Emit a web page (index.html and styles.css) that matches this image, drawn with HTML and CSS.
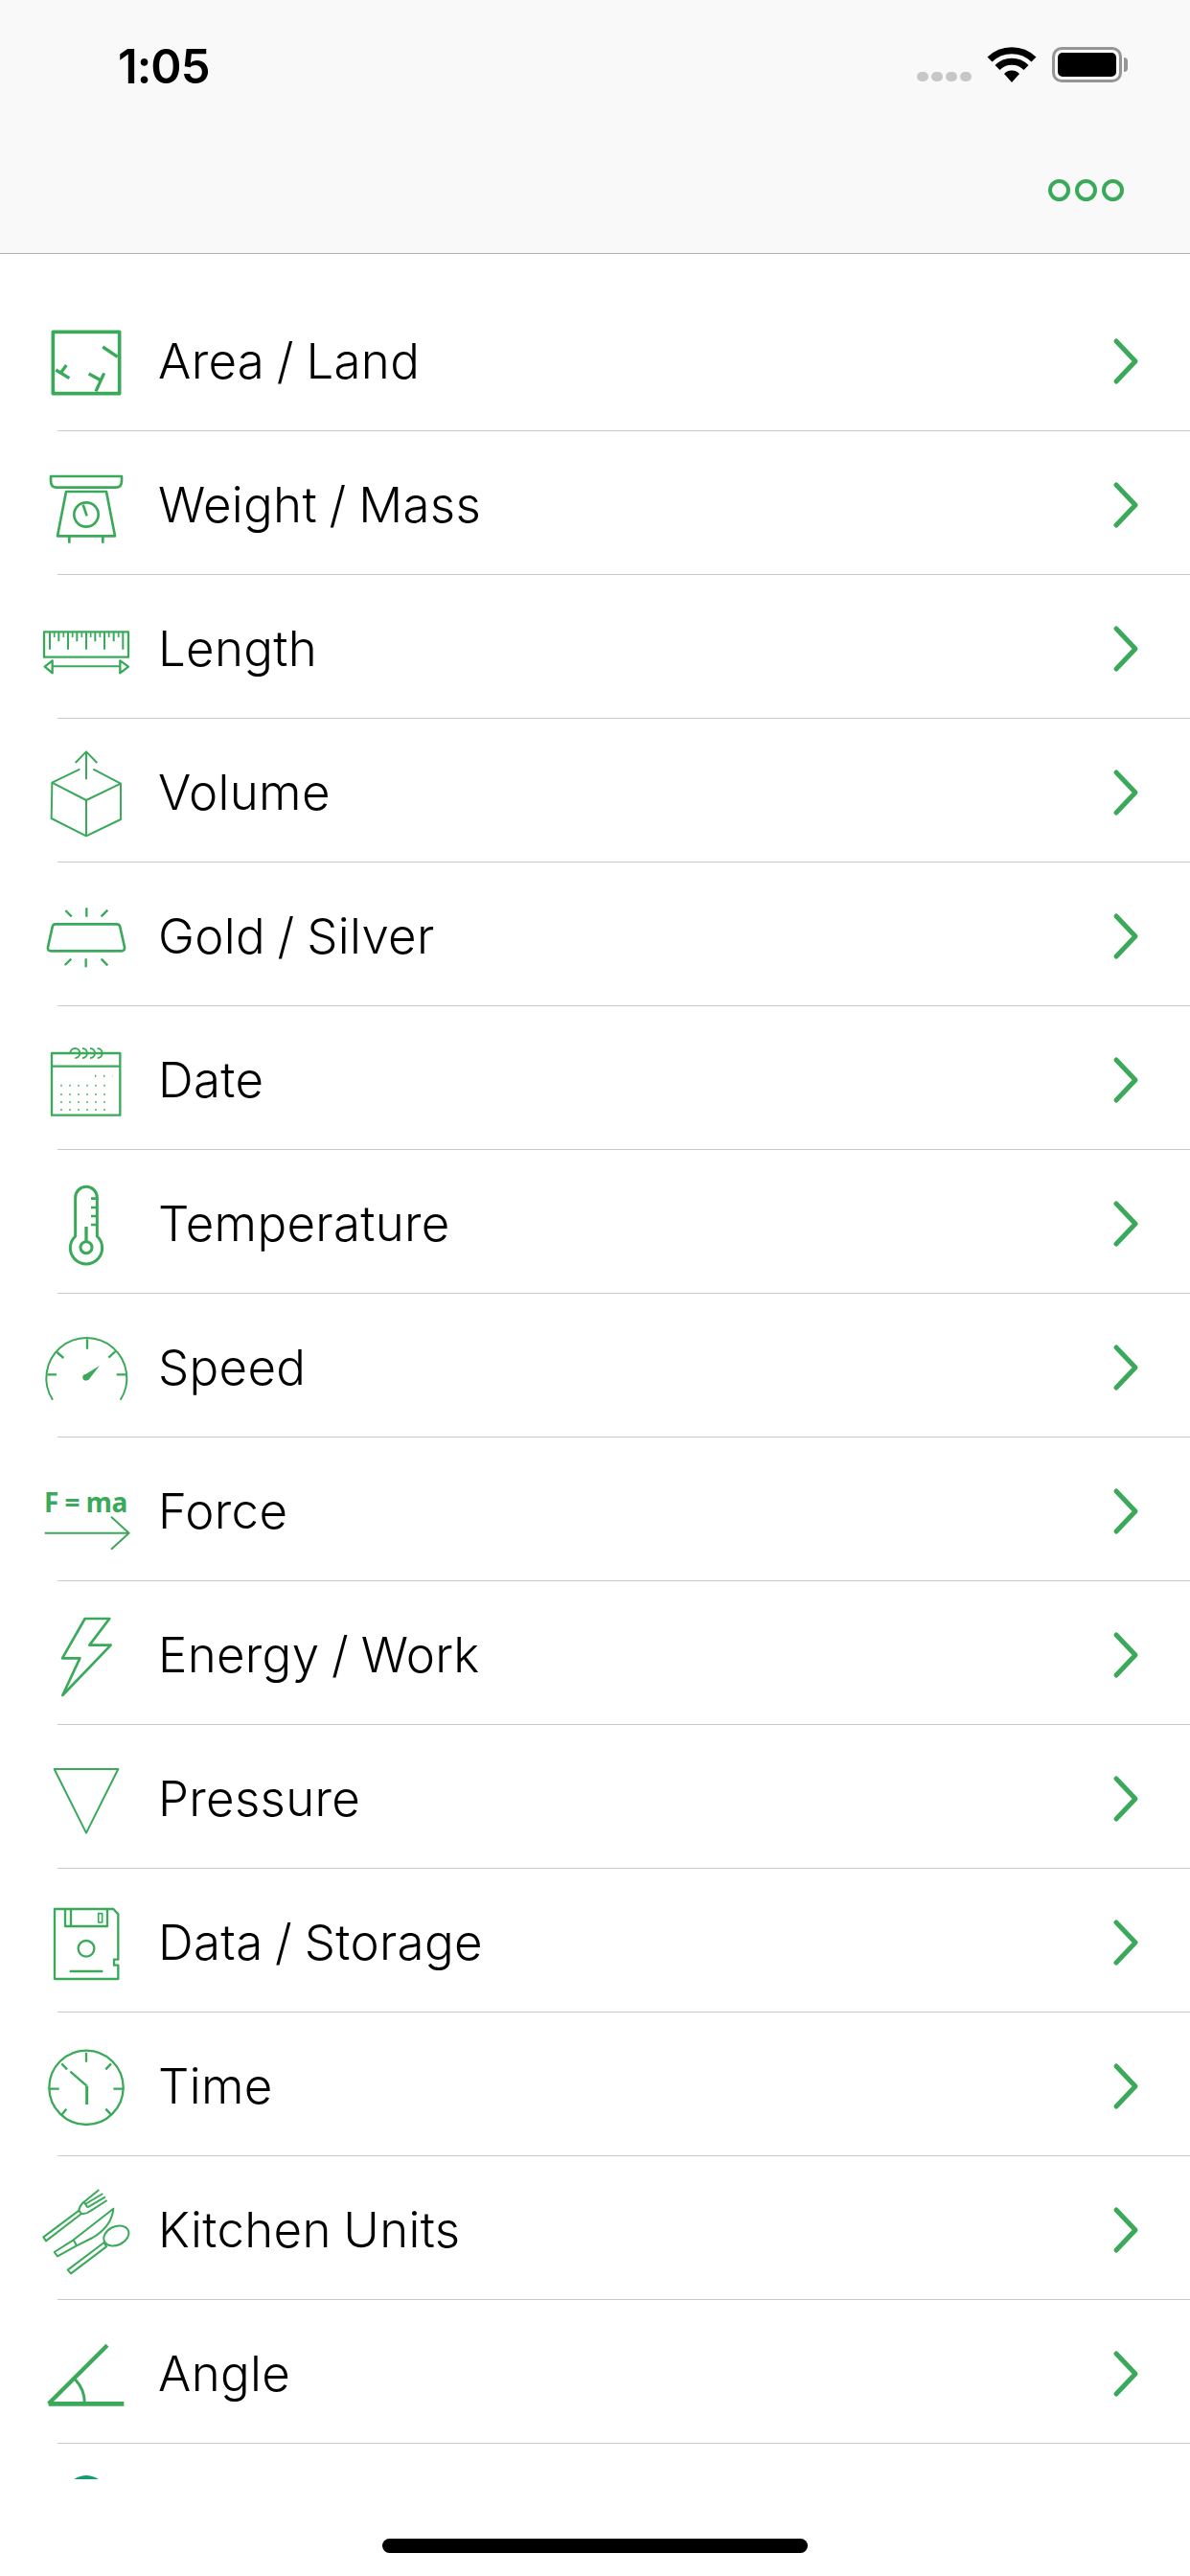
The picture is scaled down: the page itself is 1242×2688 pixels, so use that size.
FILE: index.html
```html
<!DOCTYPE html>
<html lang="en">
<head>
  <meta charset="UTF-8" />
  <title>Unit Converter</title>
  <link rel="stylesheet" href="styles.css">
</head>
<body>
  <!-- Header -->
  <header class="top-bar">
    <div class="status-bar">
      <span class="time">1:05</span>
      <div class="status-icons">
        <div class="signal"><i></i><i></i><i></i><i></i></div>
        <svg class="wifi" viewBox="0 0 52 37">
          <path d="M3 13 A33 33 0 0 1 49 13" stroke-width="7" />
          <path d="M11 21.500 A21 21 0 0 1 41 21.500" stroke-width="7" />
          <path class="solid" d="M26 37 L18 28 A11 11 0 0 1 34 28 Z" />
        </svg>
        <div class="battery"><div class="battery-fill"></div></div>
        <div class="battery-nub"></div>
      </div>
    </div>
    <div class="nav-bar">
      <div class="more"><i></i><i></i><i></i></div>
    </div>
  </header>

  <!-- Category list -->
  <ul class="list">
    <li class="row">
      <svg class="icon" viewBox="30 27 360 333">
        <rect x="106" y="109" width="208" height="193" stroke-width="11" />
        <path d="M262 156 L308 187 M115 228 L157 254 M148 213 L128 240 M218 240 L258 262 M266 238 L240 295" stroke-width="10" />
      </svg>
      <span class="label">Area / Land</span>
      <svg class="chevron" viewBox="0 0 30 52"><path d="M5 5 L25 26 L5 47" /></svg>
    </li>
    <li class="row">
      <svg class="icon" viewBox="30 477 360 333">
        <path d="M99 561 H321 V575 Q321 596 303 596 H117 Q99 596 99 575 Z" stroke-width="8" />
        <path d="M147 609 H273 L300 748 H120 Z" stroke-width="8" />
        <circle cx="210" cy="681" r="38" stroke-width="8" />
        <path d="M200 650 L212 685 M157 750 V770 M262 750 V770" stroke-width="8" />
      </svg>
      <span class="label">Weight / Mass</span>
      <svg class="chevron" viewBox="0 0 30 52"><path d="M5 5 L25 26 L5 47" /></svg>
    </li>
    <li class="row">
      <svg class="icon" viewBox="30 927 360 333">
        <rect x="78" y="1048" width="264" height="79" stroke-width="7" />
        <path d="M96 1048 V1103 M153 1048 V1103 M210 1048 V1103 M267 1048 V1103 M325 1048 V1103 M124 1048 V1078 M181 1048 V1078 M238 1048 V1078 M296 1048 V1078" stroke-width="6" />
        <path d="M110 1048 V1065 M139 1048 V1065 M167 1048 V1065 M196 1048 V1065 M224 1048 V1065 M253 1048 V1065 M281 1048 V1065 M311 1048 V1065" stroke-width="5" />
        <path d="M104 1156 H316" stroke-width="6" />
        <path d="M104 1138 L80 1157 L104 1177 Z M316 1138 L342 1157 L316 1177 Z" stroke-width="7" />
      </svg>
      <span class="label">Length</span>
      <svg class="chevron" viewBox="0 0 30 52"><path d="M5 5 L25 26 L5 47" /></svg>
    </li>
    <li class="row">
      <svg class="icon" viewBox="30 117 360 333">
        <path d="M210 250 V165 M176 198 L210 163 L244 198" stroke-width="6" />
        <path d="M190 218 L103 260 L210 315 L318 263 L232 218 M103 260 L101 372 L210 427 L318 375 V263 M210 315 V427" stroke-width="6" />
      </svg>
      <span class="label">Volume</span>
      <svg class="chevron" viewBox="0 0 30 52"><path d="M5 5 L25 26 L5 47" /></svg>
    </li>
    <li class="row">
      <svg class="icon" viewBox="30 567 360 333">
        <path d="M112 703 H306 Q314 703 316 712 L330 775 Q331 787 320 787 H100 Q88 787 90 775 L104 712 Q106 703 112 703 Z" stroke-width="8" />
        <path d="M211 652 V680 M145 660 L164 679 M277 659 L257 679 M209 811 V838 M163 812 L143 831 M257 812 L277 832" stroke-width="7" />
      </svg>
      <span class="label">Gold / Silver</span>
      <svg class="chevron" viewBox="0 0 30 52"><path d="M5 5 L25 26 L5 47" /></svg>
    </li>
    <li class="row">
      <svg class="icon" viewBox="30 1017 360 333">
        <rect x="102" y="1107" width="214" height="194" stroke-width="7" />
        <path d="M102 1148 H316" stroke-width="7" />
        <path d="M175 1122 A15 15 0 1 0 160 1107 M198 1092 A15 15 0 0 1 198 1122 M222 1092 A15 15 0 0 1 222 1122 M245 1092 A15 15 0 0 1 245 1122" stroke-width="6" />
        <path class="dots" d="M237 1178 H292 M130 1208 H292 M130 1236 H292 M130 1260 H292 M130 1284 H292" stroke-width="6" />
      </svg>
      <span class="label">Date</span>
      <svg class="chevron" viewBox="0 0 30 52"><path d="M5 5 L25 26 L5 47" /></svg>
    </li>
    <li class="row">
      <svg class="icon" viewBox="30 27 360 333">
        <path d="M176 240 V119 A34 34 0 0 1 244 119 V240 A50 50 0 1 1 176 240 Z" stroke-width="9" />
        <circle cx="210" cy="275" r="18" stroke-width="9" />
        <path d="M210 210 V257" stroke-width="10" />
        <path d="M225 122 H244 M225 150 H244 M225 177 H244 M225 204 H244" stroke-width="8" />
      </svg>
      <span class="label">Temperature</span>
      <svg class="chevron" viewBox="0 0 30 52"><path d="M5 5 L25 26 L5 47" /></svg>
    </li>
    <li class="row">
      <svg class="icon" viewBox="30 477 360 333">
        <path d="M105 752 A126 126 0 1 1 317 752" stroke-width="6" />
        <path d="M213 562 V593 M118 603 L139 621 M302 600 L280 620 M88 673 H117 M305 673 H336" stroke-width="7" />
        <circle class="solid" cx="209" cy="682" r="10" />
        <path class="solid" d="M252 645 L203 675 L217 690 Z" />
      </svg>
      <span class="label">Speed</span>
      <svg class="chevron" viewBox="0 0 30 52"><path d="M5 5 L25 26 L5 47" /></svg>
    </li>
    <li class="row">
      <svg class="icon" viewBox="30 927 360 333">
        <text class="formula" x="78" y="1105" textLength="262">F = ma</text>
        <path d="M80 1169 H342 M288 1118 L344 1169 L288 1220" stroke-width="6" />
      </svg>
      <span class="label">Force</span>
      <svg class="chevron" viewBox="0 0 30 52"><path d="M5 5 L25 26 L5 47" /></svg>
    </li>
    <li class="row">
      <svg class="icon" viewBox="30 27 360 333">
        <path d="M206 87 H283 L220 170 H287 L136 327 L190 211 H135 Z" stroke-width="8" />
      </svg>
      <span class="label">Energy / Work</span>
      <svg class="chevron" viewBox="0 0 30 52"><path d="M5 5 L25 26 L5 47" /></svg>
    </li>
    <li class="row">
      <svg class="icon" viewBox="30 477 360 333">
        <path d="M110 558 H310 L210 758 Z" stroke-width="6" />
      </svg>
      <span class="label">Pressure</span>
      <svg class="chevron" viewBox="0 0 30 52"><path d="M5 5 L25 26 L5 47" /></svg>
    </li>
    <li class="row">
      <svg class="icon" viewBox="30 927 360 333">
        <path d="M111 996 H295 L310 1012 V1154 H297 V1172 H310 V1215 H111 Z" stroke-width="7" />
        <path d="M144 996 V1050 H276 V996 M162 996 V1050" stroke-width="7" />
        <rect x="248" y="1010" width="12" height="28" stroke-width="5" />
        <circle cx="210" cy="1120" r="25" stroke-width="7" />
        <path d="M158 1191 H262" stroke-width="8" />
      </svg>
      <span class="label">Data / Storage</span>
      <svg class="chevron" viewBox="0 0 30 52"><path d="M5 5 L25 26 L5 47" /></svg>
    </li>
    <li class="row">
      <svg class="icon" viewBox="30 57 360 333">
        <circle cx="210" cy="235" r="116" stroke-width="7" />
        <path d="M210 125 V155 M92 239 H125 M295 239 H328 M133 160 L150 178 M288 160 L271 178 M148 302 L133 320 M271 302 L288 320 M160 185 L212 230" stroke-width="7" />
        <path d="M212 230 V288" stroke-width="9" />
      </svg>
      <span class="label">Time</span>
      <svg class="chevron" viewBox="0 0 30 52"><path d="M5 5 L25 26 L5 47" /></svg>
    </li>
    <li class="row">
      <svg class="icon" viewBox="30 507 360 333">
        <path d="M76 703 L187 620 L195 630 L84 715 Z" stroke-width="6" />
        <path d="M187 620 Q190 603 203 593 L250 555 M207 600 L262 567 M214 610 L270 577 M195 630 Q210 632 222 622 L275 588 M203 593 L214 610" stroke-width="6" />
        <path d="M110 750 L170 712 L180 730 L120 763 Z M170 712 L295 614 Q290 670 230 705 L180 730" stroke-width="6" />
        <path d="M152 806 L266 720 L273 733 L162 817 Z" stroke-width="6" />
        <ellipse cx="304" cy="699" rx="41" ry="29" transform="rotate(-25 304 699)" stroke-width="6" />
      </svg>
      <span class="label">Kitchen Units</span>
      <svg class="chevron" viewBox="0 0 30 52"><path d="M5 5 L25 26 L5 47" /></svg>
    </li>
    <li class="row">
      <svg class="icon" viewBox="30 957 360 333">
        <path d="M92 1225 H328" stroke-width="14" />
        <path d="M92 1225 L276 1042" stroke-width="13" />
        <path d="M175 1148 Q205 1180 205 1222" stroke-width="9" />
      </svg>
      <span class="label">Angle</span>
      <svg class="chevron" viewBox="0 0 30 52"><path d="M5 5 L25 26 L5 47" /></svg>
    </li>
    <li class="row">
      <svg class="icon" viewBox="30 0 360 333">
        <circle class="sliver" cx="210" cy="108" r="66" />
      </svg>
    </li>
  </ul>

  <!-- Home indicator -->
  <footer class="home-area"><div class="home-bar"></div></footer>
</body>
</html>
```
FILE: styles.css
```css
* {
  box-sizing: border-box;
  margin: 0;
  padding: 0;
}

body {
  width: 1242px;
  height: 2688px;
  display: flex;
  flex-direction: column;
  overflow: hidden;
  background: #fff;
  color: #000;
  font-family: 'Inter', sans-serif;
}

.top-bar {
  height: 265px;
  background: #f9f9f9;
  border-bottom: 1px solid #b2b2b2;
}

.status-bar {
  height: 132px;
  padding: 49px 65px 0 123px;
  display: flex;
  justify-content: space-between;
  align-items: flex-start;
}

.time {
  padding-top: 2px;
  font-size: 49px;
  font-weight: 600;
  line-height: 37px;
  letter-spacing: -1px;
}

.status-icons {
  display: flex;
  align-items: flex-end;
  height: 37px;
}

.signal {
  display: flex;
  gap: 3px;
  margin-right: 16px;
  margin-bottom: 1px;
}

.signal i {
  width: 12px;
  height: 10px;
  border-radius: 5px;
  background: #c7c7c7;
}

.wifi {
  width: 52px;
  height: 37px;
  margin-right: 16px;
  fill: none;
  stroke: #000;
}

.wifi .solid {
  fill: #000;
  stroke: none;
}

.battery {
  width: 73px;
  height: 37px;
  padding: 3px;
  border: 3px solid #959595;
  border-radius: 10px;
}

.battery-fill {
  height: 100%;
  background: #000;
  border-radius: 5px;
}

.battery-nub {
  width: 4px;
  height: 15px;
  margin: 0 0 11px 2px;
  background: #959595;
  border-radius: 0 4px 4px 0;
}

.nav-bar {
  height: 132px;
  padding-right: 69px;
  display: flex;
  justify-content: flex-end;
  align-items: center;
}

.more {
  display: flex;
  gap: 5px;
}

.more i {
  width: 23px;
  height: 23px;
  border: 4px solid #3aaa5a;
  border-radius: 50%;
}

.list {
  flex: 1;
  overflow: hidden;
  padding-top: 35px;
  list-style: none;
}

.row {
  height: 150px;
  margin-left: 60px;
  padding-right: 52px;
  display: flex;
  align-items: center;
  border-bottom: 1px solid #c8c8c8;
}

.icon {
  width: 120px;
  height: 111px;
  margin-left: -30px;
  margin-right: 15px;
  flex-shrink: 0;
  fill: none;
  stroke: #3aaa5a;
  stroke-linejoin: round;
}

.icon .solid {
  fill: #3aaa5a;
  stroke: none;
}

.icon .dots {
  stroke-dasharray: 4 23;
}

.icon .sliver {
  fill: #0a9f70;
  stroke: none;
}

.formula {
  font-family: 'Open Sans', sans-serif;
  font-size: 84px;
  font-weight: 700;
  fill: #3aaa5a;
  stroke: none;
}

.label {
  flex: 1;
  padding-top: 3px;
  font-size: 51px;
  font-weight: 300;
  letter-spacing: 0.3px;
  word-spacing: -2px;
}

.chevron {
  width: 30px;
  height: 52px;
  margin-top: 5px;
  fill: none;
  stroke: #3aaa5a;
  stroke-width: 5;
  stroke-linecap: round;
  stroke-linejoin: round;
}

.home-area {
  height: 101px;
  padding-top: 62px;
  display: flex;
  justify-content: center;
  background: #fff;
}

.home-bar {
  width: 444px;
  height: 15px;
  border-radius: 8px;
  background: #000;
}
```
